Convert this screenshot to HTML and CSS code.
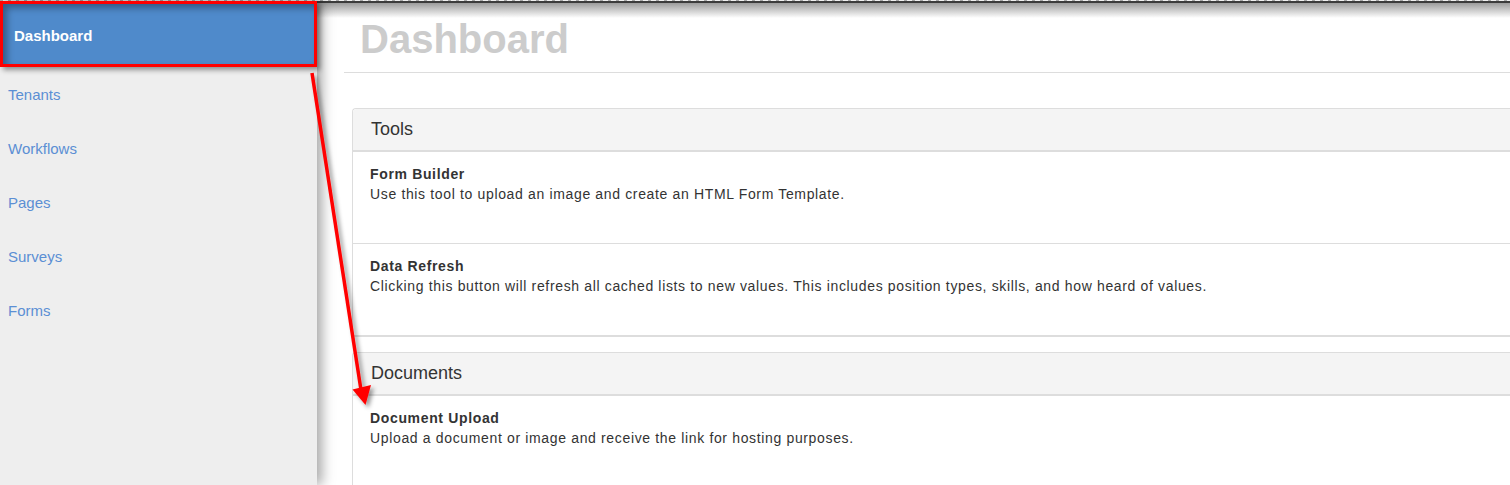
FILE: index.html
```html
<!DOCTYPE html>
<html lang="en">
<head>
<meta charset="utf-8">
<title>Dashboard</title>
<link rel="stylesheet" href="styles.css">
</head>
<body>
<div class="edge"></div>
<div class="layout">
  <nav class="sidebar">
    <a class="nav-item active" href="#">Dashboard</a>
    <a class="nav-item" href="#">Tenants</a>
    <a class="nav-item" href="#">Workflows</a>
    <a class="nav-item" href="#">Pages</a>
    <a class="nav-item" href="#">Surveys</a>
    <a class="nav-item" href="#">Forms</a>
  </nav>
  <main class="main">
    <header class="page-header"><h1>Dashboard</h1></header>
    <section class="panel">
      <div class="panel-heading">Tools</div>
      <div class="panel-body">
        <div class="item">
          <div class="item-title">Form Builder</div>
          <div class="item-desc">Use this tool to upload an image and create an HTML Form Template.</div>
        </div>
        <div class="item">
          <div class="item-title">Data Refresh</div>
          <div class="item-desc">Clicking this button will refresh all cached lists to new values. This includes position types, skills, and how heard of values.</div>
        </div>
      </div>
    </section>
    <section class="panel">
      <div class="panel-heading">Documents</div>
      <div class="panel-body">
        <div class="item">
          <div class="item-title">Document Upload</div>
          <div class="item-desc">Upload a document or image and receive the link for hosting purposes.</div>
        </div>
      </div>
    </section>
  </main>
</div>
<svg class="annotation" width="1510" height="485" viewBox="0 0 1510 485">
  <defs>
    <filter id="sh" x="-20%" y="-20%" width="140%" height="140%">
      <feDropShadow dx="3" dy="3" stdDeviation="2" flood-color="#000" flood-opacity="0.4"/>
    </filter>
  </defs>
  <g filter="url(#sh)">
    <line x1="312" y1="73" x2="361" y2="390" stroke="#ff0000" stroke-width="3.5"/>
    <polygon points="352.5,389.5 371,385 365.5,405" fill="#ff0000"/>
  </g>
</svg>
</body>
</html>
```
FILE: styles.css
```css
html, body {
  margin: 0;
  padding: 0;
  height: 100%;
}
body {
  font-family: "Liberation Sans", Arial, sans-serif;
  color: #333;
  background: #fff;
  overflow: hidden;
  position: relative;
}
.edge {
  height: 1px;
  background: repeating-linear-gradient(to right, #a8a8a8 0, #a8a8a8 3px, #f0f0f0 3px, #f0f0f0 8px);
}
.layout {
  display: flex;
  height: 484px;
}
.sidebar {
  width: 317px;
  flex: none;
  background: #eeeeee;
  box-shadow: 5px 0 12px rgba(0, 0, 0, 0.35);
  position: relative;
  z-index: 2;
  display: flex;
  flex-direction: column;
}
.nav-item {
  display: block;
  padding: 18px 8px 16px;
  font-size: 15px;
  line-height: 20px;
  color: #5b8fd4;
  text-decoration: none;
}
.nav-item.active {
  height: 20px;
  padding: 22px 10px 18px 11px;
  background: #4f8acb;
  color: #fff;
  font-weight: bold;
  border: 3px solid #ff0000;
  box-shadow: inset 4px 4px 7px rgba(0, 0, 0, 0.35), 3px 3px 5px rgba(0, 0, 0, 0.4);
}
.main {
  flex: 1;
  min-width: 0;
  border-top: 2px solid #3c3c3c;
  background: linear-gradient(to bottom, #9c9c9c 0, #ffffff 15px) no-repeat;
  padding-left: 27px;
}
.page-header {
  padding: 14px 0 11px 16px;
  border-bottom: 1px solid #dddddd;
}
.page-header h1 {
  margin: 0;
  font-size: 40px;
  line-height: 44px;
  font-weight: bold;
  color: #cccccc;
}
.panel {
  margin: 15px -4px 0 8px;
  border: 1px solid #dddddd;
  border-right: none;
  border-radius: 4px 0 0 4px;
}
.page-header + .panel {
  margin-top: 35px;
}
.panel:last-child {
  border-bottom: none;
}
.panel-heading {
  background: #f4f4f4;
  border-bottom: 2px solid #dddddd;
  padding: 0 18px;
  font-size: 18px;
  line-height: 41px;
  border-radius: 4px 0 0 0;
}
.item {
  padding: 12px 18px 39px 17px;
  border-bottom: 1px solid #dddddd;
  letter-spacing: 0.65px;
}
.item-title {
  font-size: 14px;
  line-height: 20px;
  font-weight: bold;
}
.item-desc {
  font-size: 14px;
  line-height: 20px;
}
.annotation {
  position: absolute;
  left: 0;
  top: 0;
  z-index: 5;
  pointer-events: none;
}
```
